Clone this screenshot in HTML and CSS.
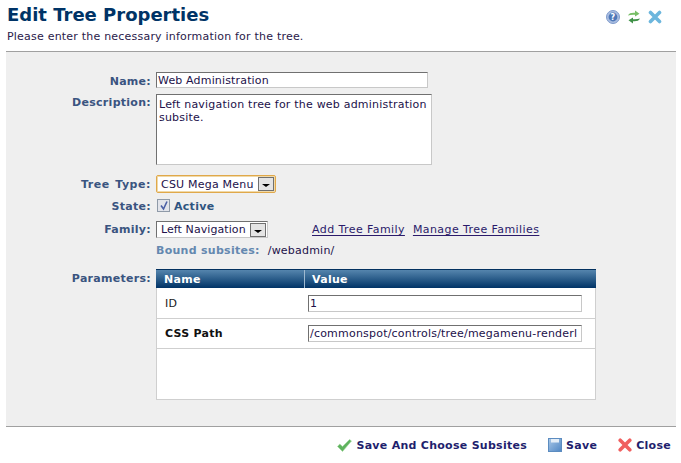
FILE: index.html
```html
<!DOCTYPE html>
<html lang="en">
<head>
<meta charset="utf-8">
<title>Edit Tree Properties</title>
<link rel="stylesheet" href="styles.css">
</head>
<body>
<div class="page">
  <header class="head">
    <div>
      <h1 class="title">Edit Tree Properties</h1>
      <p class="sub">Please enter the necessary information for the tree.</p>
    </div>
    <div class="tools">
      <svg width="14" height="14" viewBox="0 0 14 14"><circle cx="7" cy="7" r="6.5" fill="#a9bde0" stroke="#7f9bcc"/><circle cx="7" cy="7" r="4.4" fill="#4f78b8"/><text x="7" y="10" class="qmark" text-anchor="middle">?</text></svg>
      <svg width="12" height="14" viewBox="0 0 12 14"><path d="M0 5.5 C1 3 3.5 2.6 7 2.8 V0.5 L11.5 3.7 L7 6.6 V4.8 C4.5 4.6 2 4.8 0 5.5Z" fill="#77bf66"/><path d="M12 8.5 C11 11 8.5 11.4 5 11.2 V13.5 L0.5 10.3 L5 7.4 V9.2 C7.5 9.4 10 9.2 12 8.5Z" fill="#3f9148"/></svg>
      <svg width="14" height="14" viewBox="0 0 14 14"><path d="M2.5 2.5 L11.5 11.5 M11.5 2.5 L2.5 11.5" stroke="#6cb6dd" stroke-width="3.6" stroke-linecap="round"/></svg>
    </div>
  </header>

  <main class="panel">
    <div class="row row-name">
      <span class="label">Name:</span>
      <span class="input name-input">Web Administration</span>
    </div>
    <div class="row row-desc">
      <span class="label">Description:</span>
      <div class="textarea">Left navigation tree for the web administration subsite.</div>
    </div>
    <div class="row row-type">
      <span class="label label-type">Tree Type:</span>
      <span class="select select-focus">CSU Mega Menu<span class="arrow"></span></span>
    </div>
    <div class="row row-state">
      <span class="label">State:</span>
      <span class="check"><svg width="12" height="12" viewBox="0 0 12 12"><path d="M3 5.5 L5.5 9 L9 1.5" fill="none" stroke="#4a5fa5" stroke-width="1.6"/></svg></span>
      <span class="active">Active</span>
    </div>
    <div class="row row-family">
      <span class="label">Family:</span>
      <span class="select select-family">Left Navigation<span class="arrow"></span></span>
      <a class="link link-add" href="#">Add Tree Family</a>
      <a class="link link-manage" href="#">Manage Tree Families</a>
    </div>
    <div class="row row-bound">
      <span class="label"></span>
      <span class="bound">Bound subsites:</span>
      <span class="bound-val">/webadmin/</span>
    </div>
    <div class="row row-params">
      <span class="label">Parameters:</span>
      <div class="table">
        <div class="thead">
          <span class="th th-name">Name</span>
          <span class="th th-value">Value</span>
        </div>
        <div class="tr">
          <span class="td-name">ID</span>
          <span class="input val-input">1</span>
        </div>
        <div class="tr">
          <span class="td-name td-bold">CSS Path</span>
          <span class="input val-input">/commonspot/controls/tree/megamenu-renderl</span>
        </div>
      </div>
    </div>
  </main>

  <footer class="foot">
    <a class="btn" href="#"><svg width="15" height="13" viewBox="0 0 15 13"><path d="M0.5 7.5 L2.8 5 L5.5 7.5 L12.5 0.5 L14.5 2 L5.5 12.5Z" fill="#5fb35f" stroke="#a5d8a0" stroke-width=".6"/></svg>Save And Choose Subsites</a>
    <a class="btn" href="#"><svg width="14" height="14" viewBox="0 0 14 14"><defs><linearGradient id="floppy" x1="0" y1="0" x2="1" y2="1"><stop offset="0" stop-color="#a9c8e8"/><stop offset="1" stop-color="#4f86c4"/></linearGradient></defs><rect x=".5" y=".5" width="13" height="13" fill="url(#floppy)" stroke="#5c8cc0"/><rect x="3" y="1" width="8" height="3.5" fill="#e3edf7"/></svg>Save</a>
    <a class="btn" href="#"><svg width="14" height="14" viewBox="0 0 14 14"><path d="M2.2 2.2 L11.8 11.8 M11.8 2.2 L2.2 11.8" stroke="#f05f5f" stroke-width="3.6" stroke-linecap="round"/></svg>Close</a>
  </footer>
</div>
</body>
</html>
```
FILE: styles.css
```css
html, body { margin: 0; padding: 0; background: #fff; }
body { font: 11px/13px "DejaVu Sans", Verdana, sans-serif; letter-spacing: .21px; color: #22114a; }
.page { width: 681px; height: 463px; overflow: hidden; display: flex; flex-direction: column; }

.head { display: flex; justify-content: space-between; height: 52px; box-sizing: border-box; padding: 4px 14px 0 1px; margin: 0 5px 0 6px; border-bottom: 1px solid #a0a0a0; }
.title { margin: 0; font-size: 18px; line-height: 22px; font-weight: bold; letter-spacing: 0; color: #003366; }
.sub { margin: 4px 0 0; font-size: 11px; line-height: 13px; color: #2a1a4a; }
.tools { display: flex; gap: 8px; margin-top: 6px; height: 14px; align-items: center; }
.qmark { font: bold 8px "DejaVu Sans", sans-serif; fill: #fff; }

.panel { margin: 0 5px 0 6px; height: 375px; box-sizing: border-box; background: #efefef; border-bottom: 1px solid #a0a0a0; padding-top: 20px; display: flex; flex-direction: column; }
.row { display: flex; }
.label { width: 145px; padding-right: 5px; text-align: right; font-weight: bold; letter-spacing: .28px; color: #3a5480; flex: none; }
.label-type { letter-spacing: .55px; word-spacing: 1px; }

.row-name { height: 22px; align-items: flex-start; }
.row-name .label { padding-top: 3px; }
.row-desc { height: 81px; }
.row-desc .label { padding-top: 2px; }
.row-type { height: 23px; }
.row-type .label { padding-top: 3px; }
.row-state { height: 23px; }
.row-state .label { padding-top: 2px; }
.row-family { height: 22px; }
.row-family .label { padding-top: 2px; }
.row-bound { height: 26px; padding-top: 1px; box-sizing: border-box; }
.row-params .label { padding-top: 3px; }

.input { display: block; box-sizing: border-box; background: #fff; border: 1px solid #c8c8c8; border-top-color: #707070; border-left-color: #707070; overflow: hidden; white-space: nowrap; }
.name-input { width: 272px; height: 16px; line-height: 15px; padding-left: 1px; letter-spacing: .16px; }
.textarea { width: 276px; height: 71px; box-sizing: border-box; background: #fff; border: 1px solid #c8c8c8; border-top-color: #707070; border-left-color: #707070; padding: 3px 2px; line-height: 13px; }

.select { display: flex; align-items: center; justify-content: space-between; box-sizing: border-box; background: #fff; height: 17px; padding-left: 4px; border: 1px solid #c8c8c8; border-top-color: #707070; border-left-color: #707070; white-space: nowrap; }
.select-focus { width: 120px; height: 18px; border: 1px solid #e0a84a; border-radius: 2px; box-shadow: inset 0 0 0 1px #f0d9a8; }
.select-family { width: 112px; letter-spacing: .08px; }
.arrow { width: 16px; height: 14px; margin-right: 1px; box-sizing: border-box; background: #e4e4e4; border: 1px solid #707070; position: relative; flex: none; }
.arrow::after { content: ""; position: absolute; left: 3px; top: 6px; border: 4px solid transparent; border-top: 3px solid #000; border-bottom: 0; }

.check { width: 13px; height: 13px; box-sizing: border-box; background: #e2e4ea; border: 1px solid #8f9aa8; margin: 1px 0 0 1px; display: block; }
.active { margin-left: 4px; padding-top: 2px; font-weight: bold; letter-spacing: .28px; color: #2f5480; }

.link { color: #2b1a6a; letter-spacing: .42px; text-decoration: underline; text-underline-offset: 2px; padding-top: 2px; }
.link-add { margin-left: 44px; }
.link-manage { margin-left: 8px; }

.bound { font-weight: bold; letter-spacing: .28px; color: #6488b0; }
.bound-val { margin-left: 8px; }

.table { width: 440px; height: 131px; box-sizing: border-box; background: #fff; border: 1px solid #cfcfcf; border-top: 0; }
.thead { display: flex; height: 19px; margin: 0 -1px 1px; box-sizing: border-box; border-top: 1px solid #03315f; background: linear-gradient(#5585ad, #003366); }
.th { box-sizing: border-box; font-weight: bold; letter-spacing: .28px; color: #fff; line-height: 17px; padding: 1px 0 0 8px; }
.th-name { width: 149px; border-right: 1px solid #9fb9d0; }
.th-value { padding-left: 7px; }
.tr { display: flex; align-items: center; height: 30px; box-sizing: border-box; border-bottom: 1px solid #cfcfcf; }
.td-name { width: 151px; padding-left: 8px; box-sizing: border-box; color: #1a1a1a; }
.td-bold { font-weight: bold; letter-spacing: .28px; color: #111; }
.val-input { width: 274px; height: 17px; line-height: 15px; padding-left: 1px; }

.foot { display: flex; justify-content: flex-end; gap: 21px; align-items: center; height: 35px; padding: 1px 10px 0 0; box-sizing: border-box; }
.btn { display: flex; align-items: center; gap: 4px; font-weight: bold; letter-spacing: .28px; color: #1f1f6e; text-decoration: none; }
```
